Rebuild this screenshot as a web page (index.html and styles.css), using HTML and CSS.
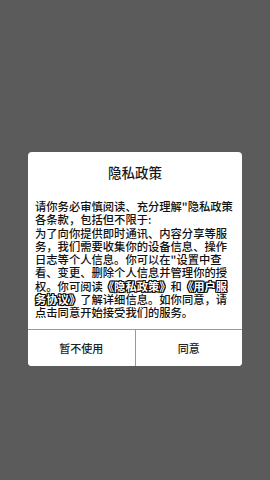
FILE: index.html
```html
<!DOCTYPE html>
<html>

<head>
  <title>隐私政策</title>
  <link rel="stylesheet" href="styles.css">
</head>

<body>
  <div class="overlay">
    <section class="dialog">
      <h1 class="title">隐私政策</h1>

      <p class="text">请你务必审慎阅读、充分理解"隐私政策各条款，包括但不限于:<br>为了向你提供即时通讯、内容分享等服务，我们需要收集你的设备信息、操作日志等个人信息。你可以在"设置中查看、变更、删除个人信息并管理你的授权。你可阅读<span class="link">《隐私政策》</span>和<span class="link">《用户服务协议》</span>了解详细信息。如你同意，请点击同意开始接受我们的服务。</p>

      <div class="actions">
        <button class="btn">暂不使用</button>
        <button class="btn">同意</button>
      </div>
    </section>
  </div>
</body>

</html>
```

FILE: styles.css
```css
html,
body {
  margin: 0;
  height: 100%;
}

body {
  background-color: #5b5b5b;
  font-family: "Noto Sans CJK SC", "Noto Sans", sans-serif;
}

.overlay {
  padding-top: 152px;
  display: flex;
  justify-content: center;
}

.dialog {
  width: 214px;
  background-color: #fff;
  border-radius: 4px;
  overflow: hidden;
}

.title {
  margin: 0;
  padding-top: 10px;
  font-size: 13.5px;
  font-weight: 500;
  line-height: 20px;
  text-align: center;
  color: #1a1a1a;
}

.text {
  margin: 0;
  padding: 18px 7px 9px 7px;
  font-size: 11.3px;
  font-weight: 500;
  line-height: 13.3px;
  color: #111;
}

.link {
  color: #fff;
  font-weight: bold;
  text-shadow: 1px 0 0 #000, -1px 0 0 #000, 0 1px 0 #000, 0 -1px 0 #000,
    1px 1px 0 #000, -1px -1px 0 #000, 1px -1px 0 #000, -1px 1px 0 #000;
}

.actions {
  display: flex;
  border-top: 1px solid #999;
}

.btn {
  flex: 1;
  height: 36px;
  margin: 0;
  padding: 0;
  border: 0;
  background: #fff;
  font-family: inherit;
  font-size: 11px;
  font-weight: 500;
  color: #222;
}

.btn + .btn {
  border-left: 1px solid #999;
}
```
